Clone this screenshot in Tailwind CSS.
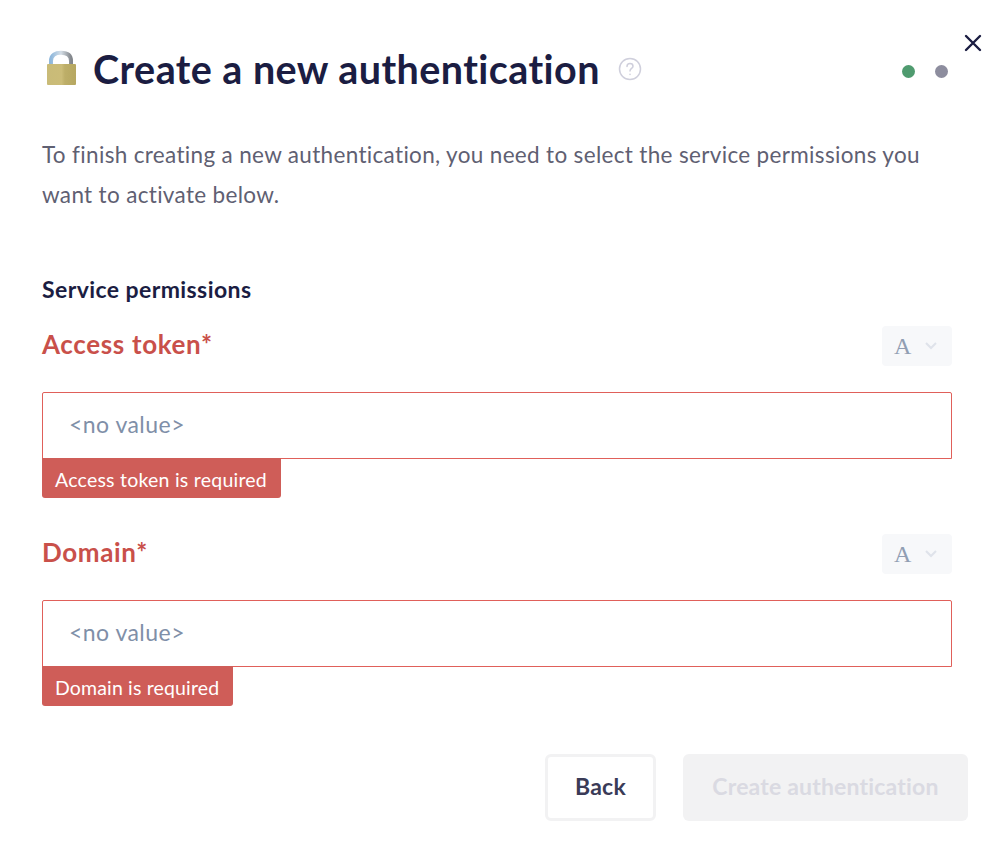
<!DOCTYPE html>
<html>
<head>
<meta charset="utf-8">
<script src="https://cdn.jsdelivr.net/npm/@tailwindcss/browser@4"></script>
</head>
<body class="bg-white font-['Lato','Noto_Sans',sans-serif]">
<div class="relative w-[1000px] h-[844px] overflow-hidden pl-[42px] pr-[48px] pt-[43px] text-[#1b1d42]">
  <button class="absolute left-[964px] top-[34px] w-[18px] h-[18px]">
    <svg viewBox="0 0 18 18" class="w-[18px] h-[18px]" fill="none" stroke="#1b1d42" stroke-width="2.400" stroke-linecap="round"><path d="M2 2 L16 16 M16 2 L2 16"/></svg>
  </button>
  <div class="flex items-center h-[52px]">
    <svg viewBox="0 0 34 38" class="w-[34px] h-[38px] ml-[2px] mr-[15px] mt-[-1px]">
      <defs>
        <linearGradient id="b" x1="0" x2="1" y1="0" y2="0"><stop offset="0" stop-color="#c9bb78"/><stop offset=".5" stop-color="#cbbc78"/><stop offset=".62" stop-color="#bdae68"/><stop offset="1" stop-color="#b6a761"/></linearGradient>
        <linearGradient id="s" x1="0" x2="1" y1="0" y2="0"><stop offset="0" stop-color="#8fb8dc"/><stop offset=".5" stop-color="#d5dee6"/><stop offset="1" stop-color="#83878c"/></linearGradient>
      </defs>
      <path d="M7 16 V11 C7 5 11.500 2.800 17 2.800 C22.500 2.800 27 5 27 11 V16" fill="none" stroke="url(#s)" stroke-width="4"/>
      <rect x="3" y="14" width="29" height="21" rx="1" fill="url(#b)"/>
    </svg>
    <h1 class="text-[39.500px] leading-[52px] font-bold tracking-[0.011em]">Create a new authentication</h1>
    <svg viewBox="0 0 24 24" class="w-[24px] h-[24px] ml-[18px]" fill="none" stroke="#cfcfdc" stroke-width="1.500" stroke-linecap="round"><circle cx="12" cy="12" r="10.500"/><path d="M9 9.500 C9 7.500 10.500 6.500 12 6.500 C13.800 6.500 15 7.700 15 9.200 C15 11.400 12 11.500 12 14"/><path d="M12 17.300 V17.500"/></svg>
    <div class="ml-auto flex items-center gap-[20px] mr-[4px] mt-[4px]">
      <span class="block w-[13px] h-[13px] rounded-full bg-[#4f9b6f]"></span>
      <span class="block w-[13px] h-[13px] rounded-full bg-[#8d8d9e]"></span>
    </div>
  </div>
  <p class="mt-[40px] text-[22.500px] leading-[40px] text-[#5f6072] w-[900px] tracking-[0.0148em]">To finish creating a new authentication, you need to select the service permissions you want to activate below.</p>
  <h2 class="mt-[59px] text-[23px] leading-[30px] font-bold tracking-[0.018em]">Service permissions</h2>

  <div class="mt-[22px]">
    <div class="flex items-center justify-between h-[40px]">
      <span class="text-[26px] pb-[3px] font-bold text-[#c9504a] tracking-[0.025em]">Access token*</span>
      <div class="flex items-center w-[70px] h-[40px] rounded-[4px] bg-[#f7f8fa] pl-[12px] gap-[14px]">
        <span class="font-['Liberation_Serif',serif] text-[24px] leading-none text-[#919eb3]">A</span>
        <svg viewBox="0 0 12 8" class="w-[12px] h-[8px]" fill="none" stroke="#dfe3ea" stroke-width="2"><path d="M1 1 L6 6 L11 1"/></svg>
      </div>
    </div>
    <div class="mt-[26px] h-[67px] border-[1px] border-solid border-[#e0605a] rounded-t-[2px] flex items-center pl-[26px] pb-[3px] text-[23px] text-[#7f8fa8] tracking-[0.02em]">&lt;no value&gt;</div>
    <div class="-mt-px w-[239px] h-[40px] bg-[#cf5d58] rounded-b-[3px] flex items-center pl-[13px] pt-[3px] text-[19.500px] text-white tracking-[0.012em]">Access token is required</div>
  </div>

  <div class="mt-[36px]">
    <div class="flex items-center justify-between h-[40px]">
      <span class="text-[26px] pb-[3px] font-bold text-[#c9504a] tracking-[0.025em]">Domain*</span>
      <div class="flex items-center w-[70px] h-[40px] rounded-[4px] bg-[#f7f8fa] pl-[12px] gap-[14px]">
        <span class="font-['Liberation_Serif',serif] text-[24px] leading-none text-[#919eb3]">A</span>
        <svg viewBox="0 0 12 8" class="w-[12px] h-[8px]" fill="none" stroke="#dfe3ea" stroke-width="2"><path d="M1 1 L6 6 L11 1"/></svg>
      </div>
    </div>
    <div class="mt-[26px] h-[67px] border-[1px] border-solid border-[#e0605a] rounded-t-[2px] flex items-center pl-[26px] pb-[3px] text-[23px] text-[#7f8fa8] tracking-[0.02em]">&lt;no value&gt;</div>
    <div class="-mt-px w-[191px] h-[40px] bg-[#cf5d58] rounded-b-[3px] flex items-center pl-[13px] pt-[3px] text-[19.500px] text-white tracking-[0.008em]">Domain is required</div>
  </div>

  <div class="mt-[48px] mr-[-16px] flex justify-end gap-[27px]">
    <button class="w-[111px] h-[67px] rounded-[6px] border-[3px] border-[#f2f2f3] bg-white pb-[3px] text-[23px] font-bold text-[#3a3b57] tracking-[0.012em]">Back</button>
    <button class="w-[285px] h-[67px] rounded-[6px] bg-[#f2f2f3] pb-[3px] text-[23px] font-bold text-[#dadae2] tracking-[0.008em]">Create authentication</button>
  </div>
</div>
</body>
</html>
